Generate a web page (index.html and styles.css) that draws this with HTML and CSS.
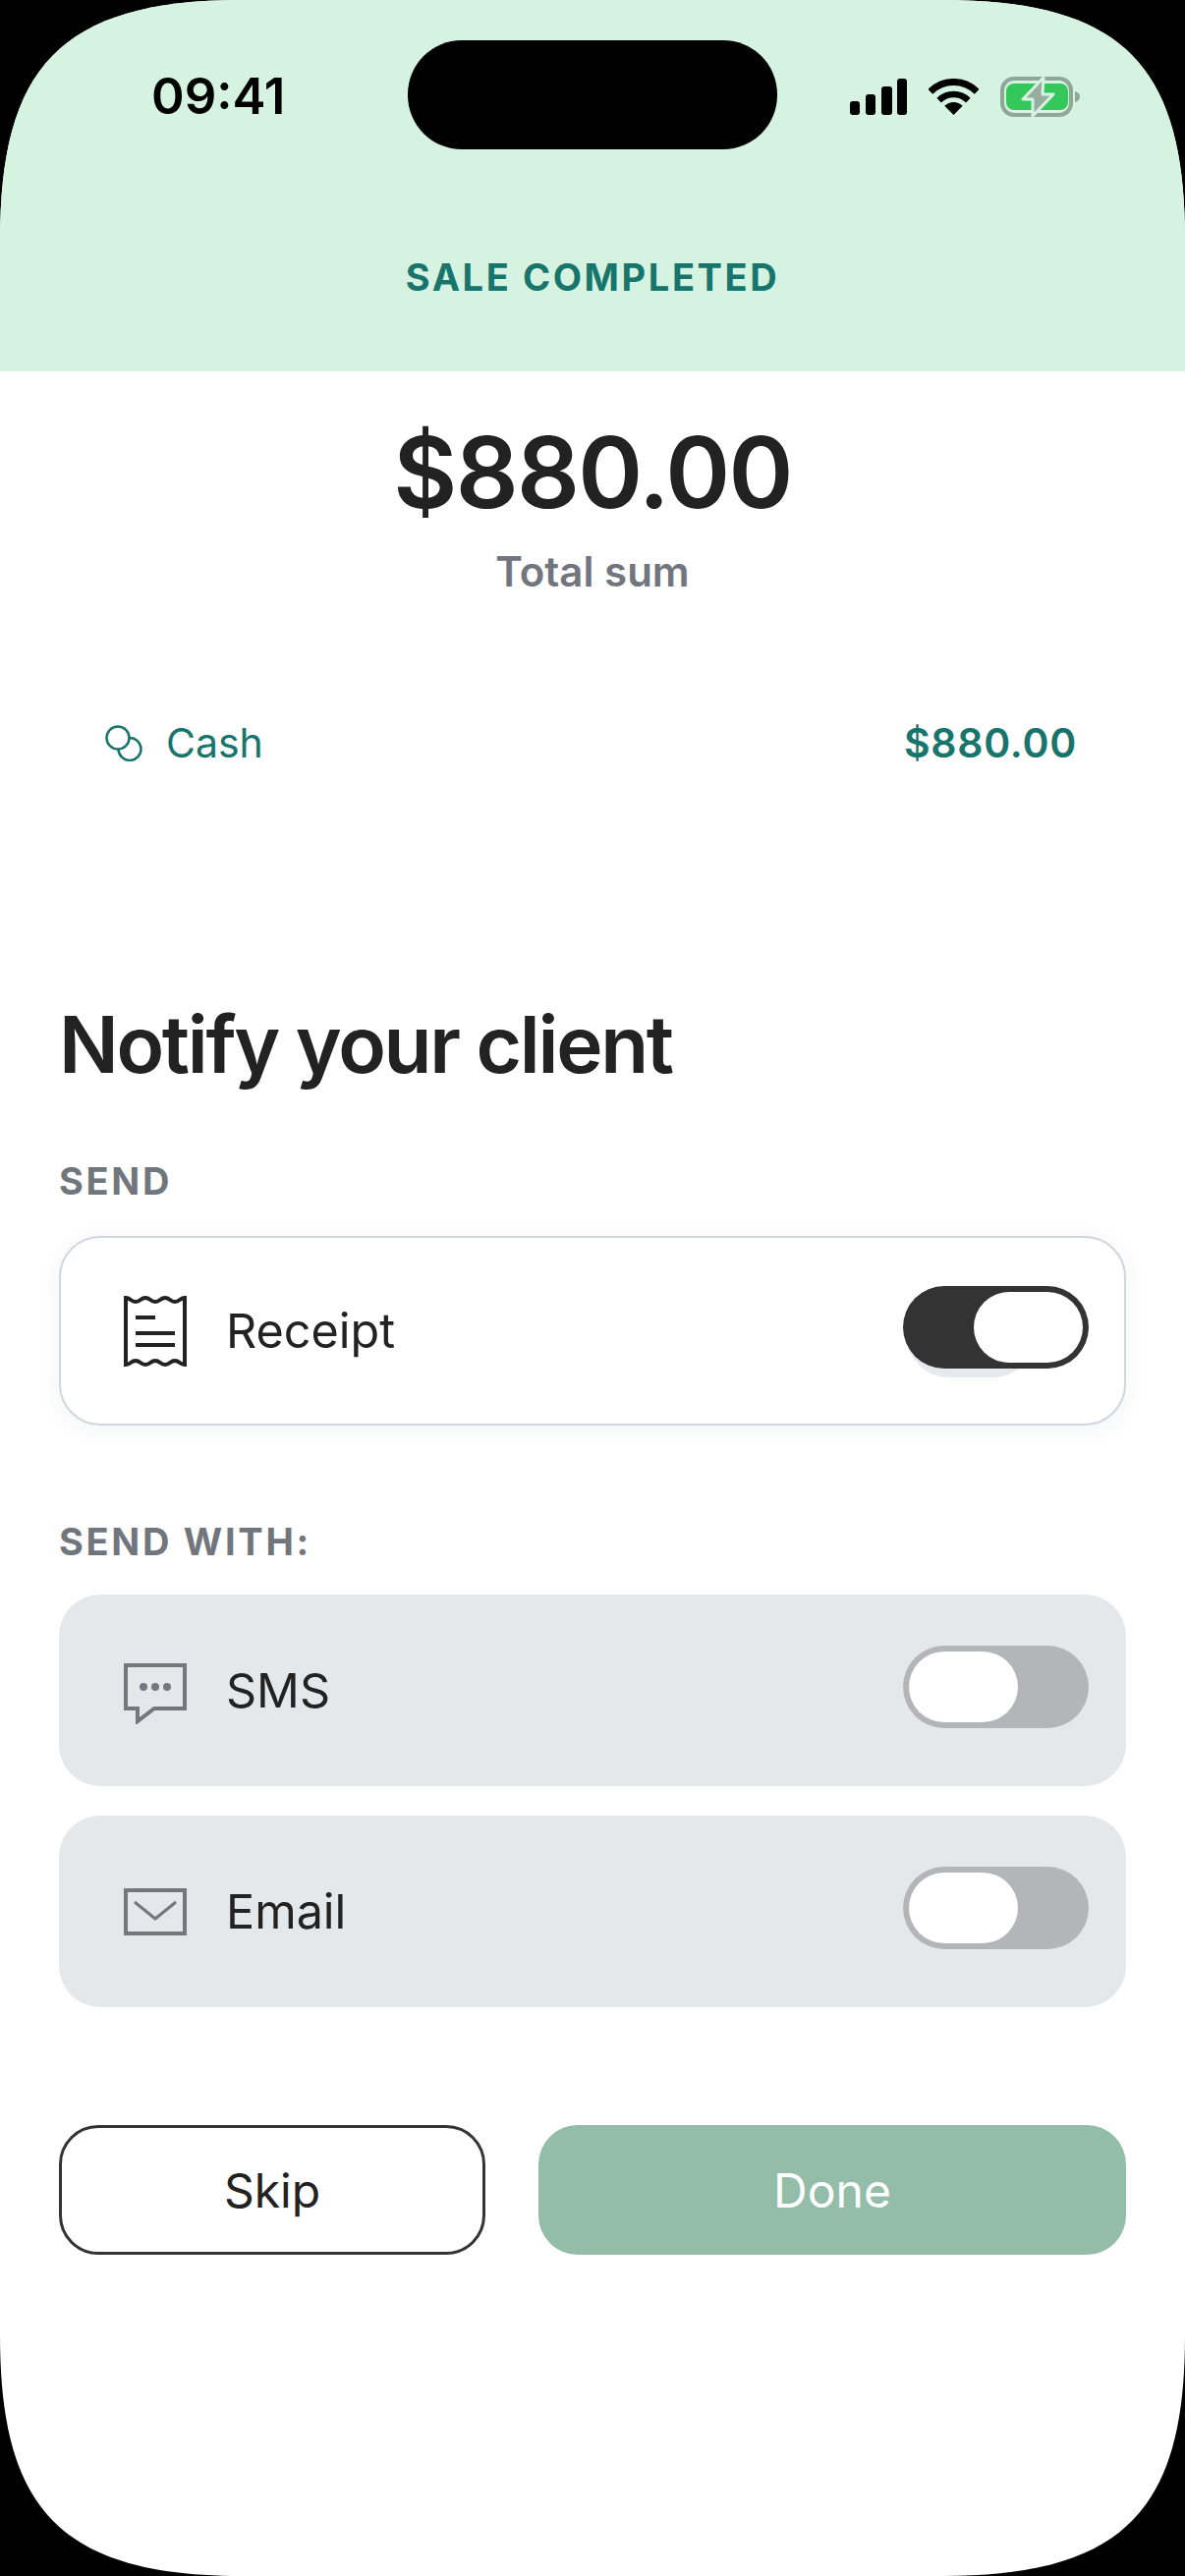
FILE: index.html
```html
<!DOCTYPE html>
<html lang="en">
<head>
    <meta charset="UTF-8">
    <meta name="viewport" content="width=device-width, initial-scale=1.0">
    <title>Sale completed</title>
    <link rel="stylesheet" href="styles.css">
</head>
<body>
    <div class="screen">
        <header class="sale-header">
            <div class="status-bar">
                <span class="time">09:41</span>
                <div class="island"></div>
                <div class="status-icons">
                    <svg class="ic-signal" width="58" height="37" viewBox="0 0 58 37">
                        <rect x="0" y="23" width="10" height="14" rx="3"/>
                        <rect x="16" y="16" width="10" height="21" rx="3"/>
                        <rect x="32" y="8" width="11" height="29" rx="3"/>
                        <rect x="48" y="0" width="10" height="37" rx="3"/>
                    </svg>
                    <svg class="ic-wifi" width="51" height="37" viewBox="0 0 51 37">
                        <path d="M1.8 13.3a33.5 33.5 0 0 1 47.4 0" fill="none" stroke="#000" stroke-width="7"/>
                        <path d="M10.65 22.15a21 21 0 0 1 29.7 0" fill="none" stroke="#000" stroke-width="6.5"/>
                        <path d="M25.5 37L16.3 27.8a13 13 0 0 1 18.4 0z"/>
                    </svg>
                    <svg class="ic-battery" width="82" height="41" viewBox="0 0 82 41">
                        <rect x="2" y="2" width="70" height="37" rx="12" fill="none" stroke="#8fa798" stroke-width="4"/>
                        <rect x="6" y="7" width="63" height="27" rx="8" fill="#34c759"/>
                        <path d="M76 15c3 .8 5 2.700 5 5.500s-2 4.700-5 5.500z" fill="#8fa798"/>
                        <path d="M44 1L23 23H33L33 40L54 18H43z" fill="#96ad9f" stroke="#d5f3e0" stroke-width="3" stroke-linejoin="round"/>
                    </svg>
                </div>
            </div>
            <h1 class="sale-title">SALE COMPLETED</h1>
        </header>

        <section class="summary">
            <div class="amount">$880.00</div>
            <div class="amount-label">Total sum</div>
            <div class="pay-row">
                <div class="pay-method">
                    <svg width="38" height="37" viewBox="0 0 38 37" fill="none" stroke="#17756b" stroke-width="2.500">
                        <circle cx="13" cy="13" r="11.500"/>
                        <path d="M24.500 13A11.500 11.500 0 1 1 13.500 24.500"/>
                    </svg>
                    <span>Cash</span>
                </div>
                <span class="pay-amount">$880.00</span>
            </div>
        </section>

        <section class="notify">
            <h2>Notify your client</h2>

            <div class="label">SEND</div>
            <div class="option option-outline">
                <svg class="option-icon" width="64" height="72" viewBox="0 0 64 72" fill="none" stroke="#222" stroke-width="4">
                    <path d="M2 2C7 2 7 6 12 6S17 2 22 2S27 6 32 6S37 2 42 2S47 6 52 6S57 2 62 2V70C57 70 57 66 52 66S47 70 42 70S37 66 32 66S27 70 22 70S17 66 12 66S7 70 2 70Z"/>
                    <path d="M12 22H32M12 38H52M12 50H52"/>
                </svg>
                <span class="option-name">Receipt</span>
                <div class="toggle toggle-on"><div class="knob"></div></div>
            </div>

            <div class="label label-with">SEND WITH:</div>
            <div class="option">
                <svg class="option-icon icon-sms" width="64" height="62" viewBox="0 0 64 62" fill="none" stroke="#73777e" stroke-width="4">
                    <path d="M2 2H62V46H31L14 59V46H2Z"/>
                    <g fill="#73777e" stroke="none">
                        <circle cx="20" cy="24" r="4"/>
                        <circle cx="32" cy="24" r="4"/>
                        <circle cx="44" cy="24" r="4"/>
                    </g>
                </svg>
                <span class="option-name">SMS</span>
                <div class="toggle"><div class="knob"></div></div>
            </div>
            <div class="option">
                <svg class="option-icon" width="64" height="48" viewBox="0 0 64 48" fill="none" stroke="#73777e" stroke-width="4">
                    <rect x="2" y="2" width="60" height="44"/>
                    <path d="M11 14L32 31L53 14" stroke-width="3"/>
                </svg>
                <span class="option-name">Email</span>
                <div class="toggle"><div class="knob"></div></div>
            </div>

            <div class="actions">
                <button class="btn btn-skip">Skip</button>
                <button class="btn btn-done">Done</button>
            </div>
        </section>
    </div>
</body>
</html>
```

FILE: styles.css
```css
* {
    box-sizing: border-box;
}
body {
    margin: 0;
    background-color: #000;
    font-family: 'Inter', 'Liberation Sans', sans-serif;
    color: #222;
}
.screen {
    width: 1206px;
    height: 2622px;
    background-color: #fff;
    overflow: hidden;
    /* continuous phone corners */
    clip-path: path('M0 245C0 70 60 0 246 0H960C1146 0 1206 70 1206 245V2377C1206 2552 1146 2622 960 2622H246C60 2622 0 2552 0 2377Z');
}

/* top band */
.sale-header {
    height: 378px;
    background-color: #d5f3e0;
    padding-top: 41px;
}
.status-bar {
    display: flex;
    align-items: flex-start;
    height: 111px;
}
.time {
    width: 415px;
    padding: 27px 0 0 154px;
    font-size: 51px;
    line-height: 60px;
    font-weight: 600;
    color: #000;
}
.island {
    width: 376px;
    height: 111px;
    border-radius: 55px;
    background-color: #000;
}
.status-icons {
    display: flex;
    align-items: center;
    padding: 37px 0 0 74px;
}
.ic-wifi {
    margin-left: 22px;
}
.ic-battery {
    margin-left: 22px;
}
.sale-title {
    margin: 107px 0 0;
    text-align: center;
    font-size: 38px;
    line-height: 46px;
    font-weight: 700;
    letter-spacing: 2.600px;
    color: #17756b;
}

/* totals */
.summary {
    text-align: center;
}
.amount {
    margin-top: 43px;
    font-size: 100px;
    line-height: 120px;
    font-weight: 600;
    letter-spacing: -1.700px;
}
.amount-label {
    margin-top: 16px;
    font-size: 42px;
    line-height: 50px;
    font-weight: 600;
    color: #71757d;
}
.pay-row {
    display: flex;
    justify-content: space-between;
    align-items: center;
    margin-top: 124px;
    padding: 0 110px 0 107px;
    font-size: 41px;
    line-height: 50px;
    color: #17756b;
}
.pay-method {
    display: flex;
    align-items: center;
    gap: 24px;
}
.pay-amount {
    font-weight: 600;
    letter-spacing: 0.700px;
}

/* notify block */
.notify {
    padding: 0 60px;
}
.notify h2 {
    margin: 234px 0 0;
    font-size: 80px;
    line-height: 96px;
    font-weight: 600;
    letter-spacing: -2.300px;
}
.label {
    margin: 68px 0 33px;
    font-size: 38px;
    line-height: 46px;
    font-weight: 700;
    letter-spacing: 2.700px;
    color: #71767d;
}
.label-with {
    margin: 95px 0 31px;
}
.option {
    display: flex;
    align-items: center;
    height: 195px;
    margin-bottom: 30px;
    padding: 0 38px 0 66px;
    border-radius: 42px;
    background-color: #e5e8eb;
    isolation: isolate;
}
.option-outline {
    height: 193px;
    margin-bottom: 0;
    padding: 0 36px 0 64px;
    background-color: #fff;
    border: 2px solid #d0d6de;
    box-shadow: 0 4px 24px rgba(30, 50, 80, 0.06);
}
.option-icon {
    flex: none;
}
.icon-sms {
    margin-top: 7px;
}
.option-name {
    flex: 1;
    margin-left: 40px;
    font-size: 48.500px;
    line-height: 56px;
}

/* switches */
.toggle {
    position: relative;
    display: flex;
    justify-content: flex-start;
    width: 189px;
    height: 84px;
    margin-bottom: 7px;
    padding: 6px;
    border-radius: 42px;
    background-color: #b4b5b9;
}
.toggle-on {
    justify-content: flex-end;
    background-color: #333;
}
.toggle-on::before {
    content: "";
    position: absolute;
    left: 4px;
    top: 9px;
    z-index: -1;
    width: 130px;
    height: 84px;
    border-radius: 42px;
    background-color: #e6eaee;
}
.knob {
    width: 111px;
    height: 72px;
    border-radius: 36px;
    background-color: #fff;
}

/* bottom buttons */
.actions {
    display: flex;
    gap: 54px;
    margin-top: 120px;
}
.btn {
    height: 132px;
    padding: 0;
    border-radius: 40px;
    font-family: inherit;
    font-size: 48px;
}
.btn-skip {
    width: 434px;
    border: 3px solid #333;
    background-color: #fff;
    color: #222;
}
.btn-done {
    flex: 1;
    border: none;
    background-color: #93bca9;
    color: #fff;
}
```
